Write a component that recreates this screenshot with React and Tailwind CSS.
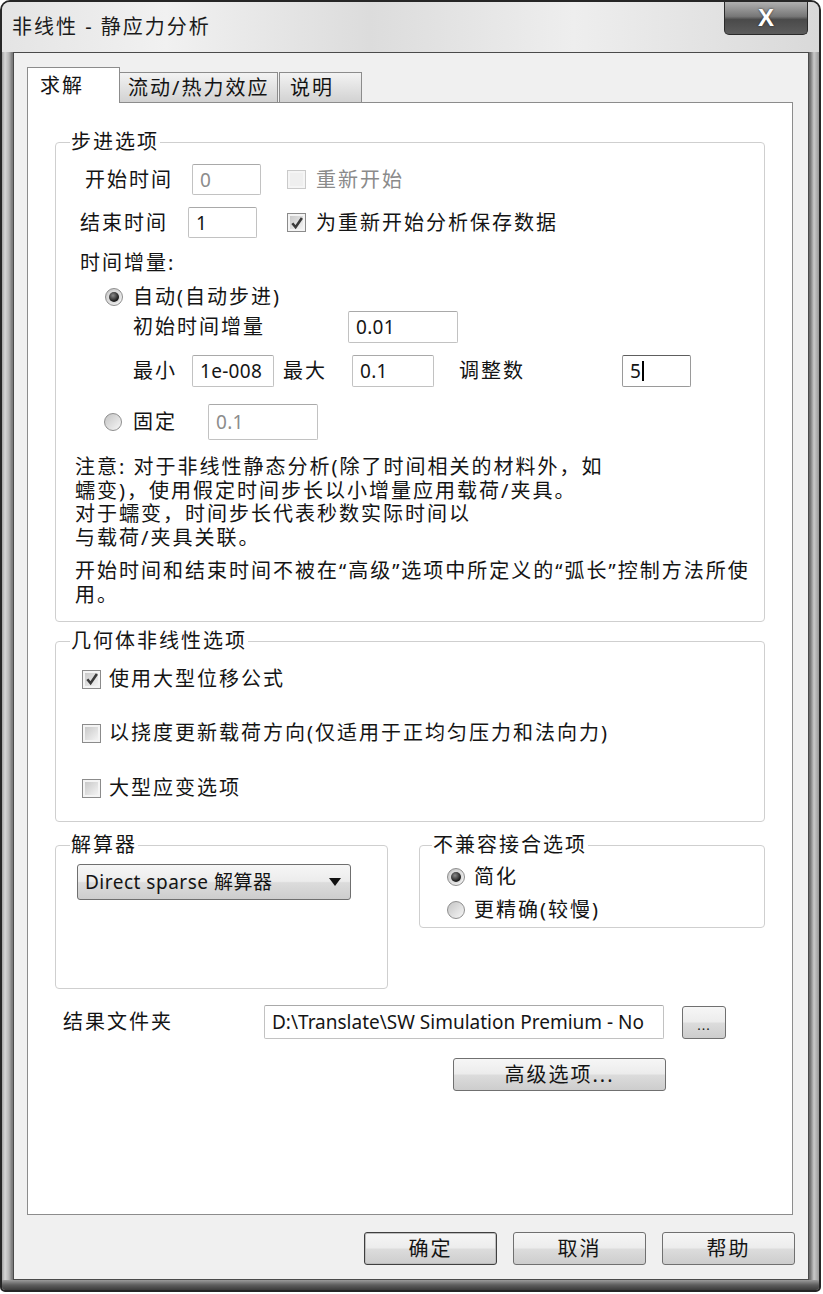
import React from 'react'

const FONT = "font-['Noto_Sans','Noto_Sans_CJK_SC',sans-serif]"
const BTN_BG = 'bg-[linear-gradient(to_bottom,#f6f6f6,#ececec_48%,#dcdcdc_52%,#cdcdcd)]'

function Checkbox({ checked, disabled }) {
  return (
    <span
      className={`flex h-[19px] w-[19px] shrink-0 items-center justify-center border ${
        disabled ? 'border-[#cacaca] bg-[#f5f5f5]' : 'border-[#8b8b8b] bg-[#f4f4f4]'
      }`}
    >
      <span
        className={`relative flex h-[13px] w-[13px] items-center justify-center ${
          disabled ? 'bg-[#efefef]' : 'bg-linear-to-br from-[#c9c9c9] to-[#f3f3f3]'
        }`}
      >
        {checked && (
          <svg viewBox="0 0 12 12" className="absolute h-[14px] w-[14px]">
            <path d="M2 6.2 L4.8 9.6 L10.2 1.8" fill="none" stroke="#3a3a3a" strokeWidth="2.2" />
          </svg>
        )}
      </span>
    </span>
  )
}

function Radio({ checked }) {
  return (
    <span className="flex h-[18px] w-[18px] shrink-0 items-center justify-center rounded-full border border-[#8e8e8e] bg-linear-to-br from-[#c4c4c4] to-[#f7f7f7]">
      {checked && (
        <span className="h-[10px] w-[10px] rounded-full bg-[radial-gradient(circle_at_40%_35%,#8a8a8a,#1e1e1e_65%)] ring-[1.5px] ring-[#dcdcdc]" />
      )}
    </span>
  )
}

function TextBox({ value, className = '', disabled, focused }) {
  return (
    <div
      className={`flex shrink-0 items-center overflow-hidden whitespace-nowrap rounded-[2px] border bg-white pl-[7px] text-[19px] tracking-[0.3px] ${
        focused ? 'border-[#9a9a9a] border-t-[#5e5e5e]' : 'border-[#c2c2c2] border-t-[#a9a9a9]'
      } ${disabled ? 'text-[#8c8c8c]' : 'text-[#151515]'} ${className}`}
    >
      {value}
      {focused && <span className="ml-[1px] h-[20px] w-[1.5px] bg-black" />}
    </div>
  )
}

function Group({ title, className = '', legendClass = 'ml-[14px]', children }) {
  return (
    <fieldset className={`rounded-[4px] border border-[#cfcfcf] ${className}`}>
      <legend className={`px-[1px] leading-[24px] ${legendClass}`}>{title}</legend>
      {children}
    </fieldset>
  )
}

export default function App() {
  return (
    <div className={`h-[1294px] w-[823px] bg-white ${FONT}`}>
      <div className="flex h-[1292px] w-[821px] flex-col overflow-hidden rounded-t-[10px] rounded-b-[5px] border-2 border-[#262626] bg-[linear-gradient(to_right,#a2a2a2,#d6d6d6_3px,#b4b4b4_7px,#7a7a7a_10px,#c0c0c0_50%,#6e6e6e_calc(100%-9px),#c9c9c9_calc(100%-5px),#9a9a9a_100%)] text-[20px] leading-[24px] tracking-[2px] text-[#141414]">
        {/* Title bar */}
        <div className="flex h-[50px] shrink-0 items-start justify-between bg-[linear-gradient(to_right,#e4e4e4,#f1f1f1_20%,#dcdcdc_45%,#eeeeee_70%,#d9d9d9)]">
          <span className="self-center pl-[10px] text-[#1a1a1a]">非线性 - 静应力分析</span>
          <div className="mr-[11px] flex h-[33px] w-[84px] items-center justify-center rounded-b-[5px] border border-t-0 border-[#2a2a2a] bg-[linear-gradient(to_bottom,#b0b0b0,#777_45%,#4a4a4a_55%,#5c5c5c)] font-['Liberation_Sans',sans-serif] text-[24px] font-bold tracking-normal text-white [text-shadow:0_0_2px_#222]">
            X
          </div>
        </div>

        {/* Body */}
        <div className="flex flex-1 pl-[11px] pr-[10px]">
          <div className="flex flex-1 flex-col border border-[#4a4a4a] bg-[#f0f0f0] pl-[13px] pt-[14px]">
            {/* Tabs */}
            <div className="flex h-[35px] items-end">
              <div className="relative z-10 -mb-px flex h-[36px] w-[93px] items-start border border-b-0 border-[#8c8c8c] bg-white pl-[12px] pt-[6px]">
                求解
              </div>
              <div className="flex h-[30px] w-[158px] items-center border border-b-0 border-l-0 border-[#8c8c8c] bg-linear-to-b from-[#f3f3f3] to-[#d2d2d2] pl-[8px]">
                流动/热力效应
              </div>
              <div className="ml-[1px] flex h-[30px] w-[83px] items-center border border-b-0 border-[#8c8c8c] bg-linear-to-b from-[#f3f3f3] to-[#d2d2d2] pl-[10px]">
                说明
              </div>
            </div>

            {/* Tab panel */}
            <div className="flex h-[1113px] w-[766px] flex-col border border-[#8c8c8c] bg-white px-[27px] pt-[27px]">
              {/* 步进选项 */}
              <Group title="步进选项">
                <div className="flex flex-col pb-[15px]">
                  <div className="mt-[4px] flex h-[43px] items-center pl-[29px]">
                    <span className="w-[107px]">开始时间</span>
                    <TextBox value="0" className="h-[31px] w-[69px]" disabled />
                    <span className="ml-[26px]"><Checkbox disabled /></span>
                    <span className="ml-[10px] text-[#8a8a8a]">重新开始</span>
                  </div>
                  <div className="flex h-[43px] items-center pl-[24px]">
                    <span className="w-[108px]">结束时间</span>
                    <TextBox value="1" className="h-[31px] w-[69px]" />
                    <span className="ml-[30px]"><Checkbox checked /></span>
                    <span className="ml-[10px]">为重新开始分析保存数据</span>
                  </div>
                  <div className="flex h-[38px] items-center pl-[24px]">时间增量:</div>
                  <div className="flex h-[30px] items-center pl-[49px]">
                    <Radio checked />
                    <span className="ml-[10px]">自动(自动步进)</span>
                  </div>
                  <div className="flex h-[30px] items-center pl-[77px]">
                    <span className="w-[215px]">初始时间增量</span>
                    <TextBox value="0.01" className="h-[32px] w-[110px]" />
                  </div>
                  <div className="flex h-[58px] items-center pl-[77px]">
                    <span className="w-[59px]">最小</span>
                    <TextBox value="1e-008" className="h-[32px] w-[82px]" />
                    <span className="ml-[9px] w-[69px]">最大</span>
                    <TextBox value="0.1" className="h-[32px] w-[82px]" />
                    <span className="ml-[25px] w-[163px]">调整数</span>
                    <TextBox value="5" className="h-[32px] w-[69px]" focused />
                  </div>
                  <div className="flex h-[44px] items-center pl-[48px]">
                    <Radio />
                    <span className="ml-[11px] w-[75px]">固定</span>
                    <TextBox value="0.1" className="h-[36px] w-[110px]" disabled />
                  </div>
                  <div className="mt-[11px] flex flex-col pl-[19px]">
                    <span className="h-[23.5px] leading-[23.5px]">注意: 对于非线性静态分析(除了时间相关的材料外，如</span>
                    <span className="h-[23.5px] leading-[23.5px]">蠕变)，使用假定时间步长以小增量应用载荷/夹具。</span>
                    <span className="h-[23.5px] leading-[23.5px]">对于蠕变，时间步长代表秒数实际时间以</span>
                    <span className="h-[23.5px] leading-[23.5px]">与载荷/夹具关联。</span>
                  </div>
                  <div className="mt-[10px] flex flex-col pl-[19px]">
                    <span className="h-[23.5px] leading-[23.5px]">开始时间和结束时间不被在“高级”选项中所定义的“弧长”控制方法所使</span>
                    <span className="h-[23.5px] leading-[23.5px]">用。</span>
                  </div>
                </div>
              </Group>

              {/* 几何体非线性选项 */}
              <Group title="几何体非线性选项" className="mt-[7px]">
                <div className="flex flex-col pb-[19px] pl-[26px]">
                  <div className="mt-[12px] flex h-[28px] items-center">
                    <Checkbox checked />
                    <span className="ml-[8px]">使用大型位移公式</span>
                  </div>
                  <div className="mt-[26px] flex h-[28px] items-center">
                    <Checkbox />
                    <span className="ml-[8px]">以挠度更新载荷方向(仅适用于正均匀压力和法向力)</span>
                  </div>
                  <div className="mt-[27px] flex h-[28px] items-center">
                    <Checkbox />
                    <span className="ml-[8px]">大型应变选项</span>
                  </div>
                </div>
              </Group>

              {/* Solver + incompatible bonding */}
              <div className="mt-[11px] flex items-start">
                <Group title="解算器" className="h-[156px] w-[333px]">
                  <div className="pl-[21px] pt-[7px]">
                    <div className={`flex h-[36px] w-[274px] items-center justify-between rounded-[3px] border border-[#6f6f6f] pl-[7px] pr-[9px] text-[19px] tracking-[0.5px] ${BTN_BG}`}>
                      <span>Direct sparse 解算器</span>
                      <svg viewBox="0 0 12 8" className="h-[8px] w-[12px]">
                        <path d="M0 0 H12 L6 8 Z" fill="#111" />
                      </svg>
                    </div>
                  </div>
                </Group>
                <Group title="不兼容接合选项" className="ml-[31px] w-[346px]" legendClass="ml-[12px]">
                  <div className="flex flex-col pb-[2px] pl-[27px]">
                    <div className="mt-[5px] flex h-[30px] items-center">
                      <Radio checked />
                      <span className="ml-[9px]">简化</span>
                    </div>
                    <div className="mt-[3px] flex h-[30px] items-center">
                      <Radio />
                      <span className="ml-[9px]">更精确(较慢)</span>
                    </div>
                  </div>
                </Group>
              </div>

              {/* Result folder */}
              <div className="mt-[16px] flex items-center pl-[8px]">
                <span className="w-[201px]">结果文件夹</span>
                <TextBox value="D:\Translate\SW Simulation Premium - No" className="h-[34px] w-[400px] tracking-[0px]" />
                <div className={`ml-[18px] flex h-[33px] w-[44px] items-end justify-center rounded-[3px] border border-[#707070] pb-[6px] text-[13px] leading-none tracking-[1px] ${BTN_BG}`}>
                  ...
                </div>
              </div>

              <div className="mt-[19px] flex pl-[398px]">
                <div className={`flex h-[33px] w-[213px] items-center justify-center rounded-[3px] border border-[#707070] ${BTN_BG}`}>
                  高级选项...
                </div>
              </div>
            </div>

            {/* Dialog buttons */}
            <div className="mt-[17px] flex justify-end gap-[16px] pr-[13px]">
              <div className={`flex h-[33px] w-[133px] items-center justify-center rounded-[3px] border border-[#3f3f3f] shadow-[inset_0_0_0_1px_#bdbdbd] ${BTN_BG}`}>
                确定
              </div>
              <div className={`flex h-[33px] w-[133px] items-center justify-center rounded-[3px] border border-[#707070] ${BTN_BG}`}>
                取消
              </div>
              <div className={`flex h-[33px] w-[133px] items-center justify-center rounded-[3px] border border-[#707070] ${BTN_BG}`}>
                帮助
              </div>
            </div>
          </div>
        </div>

        {/* Bottom frame */}
        <div className="h-[10px] shrink-0 bg-linear-to-b from-[#9c9c9c] via-[#5e5e5e] to-[#3c3c3c]" />
      </div>
    </div>
  )
}
